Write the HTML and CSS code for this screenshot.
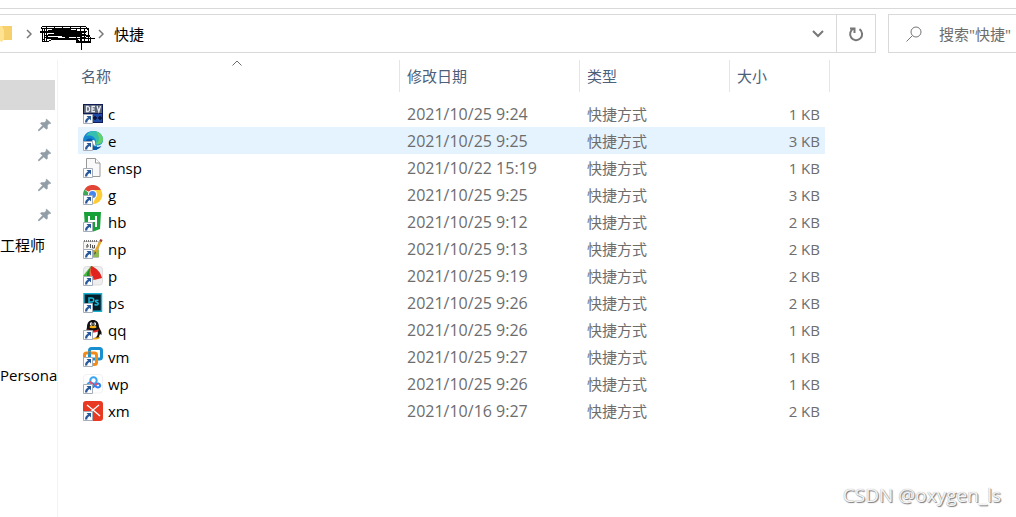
FILE: index.html
```html
<!DOCTYPE html>
<html lang="zh-CN">
<head>
    <meta charset="UTF-8">
    <meta name="viewport" content="width=device-width, initial-scale=1.0">
    <title>快捷</title>
    <link rel="stylesheet" href="styles.css">
</head>
<body>
    <svg class="defs" width="0" height="0" aria-hidden="true">
        <symbol id="shortcut" viewBox="0 0 10 10">
            <path d="M.5.5h9v9h-9z" fill="#fff" stroke="#a5adb8"/>
            <path d="M3.500 2H8v4.500L6.600 5.100C5 6 4.400 7 4.300 8.400H2C2 6.200 3 4.700 5 3.500z" fill="#28589c"/>
        </symbol>
        <symbol id="pin" viewBox="0 0 14 14">
            <path d="M8.500 1 13 5.300l-1.300.5-.7-.2-1.600 1.900.1 2.900-1.100.9L5.700 8.900 1 13l-.8-.3v-.6L4.500 7.600 2.300 5.400l.9-1 3 .2L8.300 3l-.3-1z" fill="#929ea7" stroke="#929ea7" stroke-width=".5"/>
        </symbol>
    </svg>

    <header class="toolbar">
        <nav class="address" aria-label="地址">
            <svg class="folder" width="12" height="18" viewBox="0 0 12 18"><path d="M0 1h12v14H0z" fill="#f5d06c"/><path d="M0 1h2l2 4v9l-2 3-2-1z" fill="#ffe391"/></svg>
            <svg class="chevron" width="6" height="10" viewBox="0 0 6 10"><path d="M1 1l4 4-4 4"/></svg>
            <svg class="scribble" width="56" height="28" viewBox="0 0 56 28" fill="none" stroke="#000" shape-rendering="crispEdges">
                <path d="M1.500 4.500h44l3 4v4l2 3v4h-15M1.500 4.500v2h44M0 9.500h47M0 10.500h46M2.500 7v13l7-1 3-2h24l3 3h11M2 18.500l8-6 10 1 14 4 14-3M4.500 7v13M6.500 5v14M5 13.500h43M8 12.500h38M7 16.500h40M36.500 7v13h12v-14M40.500 5v15M44.500 6v13M4 15.500h14M14.500 4v4M22.500 4v4M30.500 4v4M8 8.500h28l4 3"/>
                <path d="M14 11h25M22 14h18M12 8h18" stroke-width="2"/>
                <path d="M15 11l10 2h14" stroke-width="3"/>
                <path d="M41.500 9v19M33 16.500h22"/>
            </svg>
            <svg class="chevron" width="6" height="10" viewBox="0 0 6 10"><path d="M1 1l4 4-4 4"/></svg>
            <a class="crumb" href="#">快捷</a>
            <button class="history" type="button" aria-label="历史记录">
                <svg width="12" height="8" viewBox="0 0 12 8"><path d="M1 1l5 5 5-5"/></svg>
            </button>
            <button class="refresh" type="button" aria-label="刷新">
                <svg width="16" height="16" viewBox="0 0 16 16"><path d="M11.500 3.200a6 6 0 1 1-5.900-.5"/><path d="M2 2.500h4.500V7"/></svg>
            </button>
        </nav>
        <label class="search">
            <svg width="16" height="16" viewBox="0 0 16 16"><circle cx="10" cy="6" r="5"/><path d="M6.500 9.500L.5 15.500"/></svg>
            <input type="text" placeholder='搜索"快捷"' aria-label="搜索">
        </label>
    </header>

    <div class="content">
        <aside class="sidebar">
            <div class="side-row selected"></div>
            <div class="side-row pinned"><svg width="14" height="14"><use href="#pin"/></svg></div>
            <div class="side-row pinned"><svg width="14" height="14"><use href="#pin"/></svg></div>
            <div class="side-row pinned"><svg width="14" height="14"><use href="#pin"/></svg></div>
            <div class="side-row pinned"><svg width="14" height="14"><use href="#pin"/></svg></div>
            <div class="side-row">工程师</div>
            <div class="side-row drive">Persona</div>
        </aside>

        <main class="files">
            <table class="file-table">
                <thead>
                    <tr>
                        <th class="col-name"><button type="button">名称
                            <svg class="sort" width="10" height="6" viewBox="0 0 10 6"><path d="M.5 5.500L5 1l4.500 4.500"/></svg></button></th>
                        <th class="col-date"><button type="button">修改日期</button></th>
                        <th class="col-type"><button type="button">类型</button></th>
                        <th class="col-size"><button type="button">大小</button></th>
                    </tr>
                </thead>
                <tbody>
                    <tr>
                        <td><div class="name">
                            <svg class="icon" viewBox="0 0 20 20"><path d="M0 0h20v19H0z" fill="#101c58"/><path d="M1 10h18v8H1z" fill="#1e4ba6"/><path d="M1 1h18v8H1z" fill="#5b6475"/><path d="M3.500 2.500v5h1.500l1.500-1v-3L5 2.500zM12 2.500H9v5h3M9 5h2.500M14 2l1.800 5.500L17.500 2" fill="none" stroke="#e8ebf2" stroke-width="1.300"/><path d="M10 14h4M12 12v4M15 14h4M17 12v4" stroke="#071136" stroke-width="1.500"/><use href="#shortcut" y="10" width="10" height="10"/></svg>
                            c</div></td>
                        <td class="date">2021/10/25 9:24</td>
                        <td>快捷方式</td>
                        <td class="size">1 KB</td>
                    </tr>
                    <tr class="hover">
                        <td><div class="name">
                            <svg class="icon" viewBox="0 0 20 20"><path d="M0 10C0 4 4.500 0 10 0c6 0 10 4 10 9 0 4-3 5.500-6 5.500V19H8L0 12z" fill="#1488cf"/><path d="M4 3.500C6 1 8 0 10.500 0 16 0 20 4 20 8.500c0 4.500-5.500 6.500-8 4.500 1.500-2 1-5-1-6.500C9 4.500 6 4 3 5z" fill="#35bfb0"/><path d="M13 .5c4 1 7 4.500 7 8-.3 4-5 5.500-7.500 4.500C17 11 17 6 13 .5z" fill="#65d06a"/><path d="M9 9.500c2-1.500 3.500.5 3 2.500-.5 1.500.5 2.500 3 2.500h-4z" fill="#fff"/><path d="M3 10c1-3 5-3 7-1-2 0-3 3-1 5 2.500 2.500 6 2.500 9.500 1-2.500 4-8 5-12 3z" fill="#0c59a8"/><use href="#shortcut" y="10" width="10" height="10"/></svg>
                            e</div></td>
                        <td class="date">2021/10/25 9:25</td>
                        <td>快捷方式</td>
                        <td class="size">3 KB</td>
                    </tr>
                    <tr>
                        <td><div class="name">
                            <svg class="icon" viewBox="0 0 20 20"><path d="M3.500.5h9l4.500 4.500v13.500H3.500z" fill="#f9f9f9" stroke="#999"/><path d="M12.500.5V5H17" fill="#fff" stroke="#999"/><use href="#shortcut" y="10" width="10" height="10"/></svg>
                            ensp</div></td>
                        <td class="date">2021/10/22 15:19</td>
                        <td>快捷方式</td>
                        <td class="size">1 KB</td>
                    </tr>
                    <tr>
                        <td><div class="name">
                            <svg class="icon" viewBox="0 0 20 20"><path d="M10 9L1.500 4.500A9.500 9.500 0 0 1 18 5z" fill="#e24436"/><path d="M10 9h-3L1.500 4.500a9 9 0 0 0 0 9.500l4.500 4 4-5z" fill="#3da854"/><path d="M10 5h8a9.300 9.300 0 0 1-8.500 14l4-8z" fill="#fc3"/><circle cx="9.500" cy="9.500" r="4.500" fill="#fff"/><circle cx="9.500" cy="9.500" r="3.500" fill="#4687ed"/><use href="#shortcut" y="10" width="10" height="10"/></svg>
                            g</div></td>
                        <td class="date">2021/10/25 9:25</td>
                        <td>快捷方式</td>
                        <td class="size">3 KB</td>
                    </tr>
                    <tr>
                        <td><div class="name">
                            <svg class="icon" viewBox="0 0 20 20"><path d="M1 0h17l-1 17-6.500 2.500L2 17z" fill="#17a138"/><path d="M6 4v9M13 4v11M6 9h7" fill="none" stroke="#fff" stroke-width="2"/><use href="#shortcut" y="10" width="10" height="10"/></svg>
                            hb</div></td>
                        <td class="date">2021/10/25 9:12</td>
                        <td>快捷方式</td>
                        <td class="size">2 KB</td>
                    </tr>
                    <tr>
                        <td><div class="name">
                            <svg class="icon" viewBox="0 0 20 20"><path d="M.5 2.500h15v16H.5z" fill="#f7f7f5" stroke="#bbb"/><path d="M1 2h14" stroke="#777" stroke-dasharray="1 1" stroke-width="2"/><path d="M4 9V6l1-1M3.500 7H6M7.500 5v4M9.500 6v3h2V6" fill="none" stroke="#555"/><path d="M10 11h6v7h-6z" fill="#8ebb54"/><path d="M18 1.500l-6 12" stroke="#e5a929" stroke-width="2.500"/><path d="M18.500 .5l-1 2" stroke="#a43c32" stroke-width="2.500"/><path d="M12 12l-1 4 2-2z" fill="#444"/><use href="#shortcut" y="10" width="10" height="10"/></svg>
                            np</div></td>
                        <td class="date">2021/10/25 9:13</td>
                        <td>快捷方式</td>
                        <td class="size">2 KB</td>
                    </tr>
                    <tr>
                        <td><div class="name">
                            <svg class="icon" viewBox="0 0 20 20"><rect x=".5" y=".5" width="19" height="18.500" rx="3" fill="#eee" stroke="#ddd"/><path d="M0 10L8 0l2 1-4 9z" fill="#46b63c"/><path d="M9 1C5 4 3.500 7 4 10h3z" fill="#218f2c"/><path d="M8 0c6 2 9.500 6.500 11 12l-8 2C7.500 10 7 5 8 0z" fill="#e12320"/><path d="M8 1c-1 5 1 9 4 13H9C6 10 6 5 8 1z" fill="#fa6746"/><use href="#shortcut" y="10" width="10" height="10"/></svg>
                            p</div></td>
                        <td class="date">2021/10/25 9:19</td>
                        <td>快捷方式</td>
                        <td class="size">2 KB</td>
                    </tr>
                    <tr>
                        <td><div class="name">
                            <svg class="icon" viewBox="0 0 20 20"><path d="M1 .8h17.500v17.500H1z" fill="#071e29" stroke="#17b0d1" stroke-width="1.500"/><path d="M6 12V5h2.500c3 0 3 4 0 4H6M15.500 7.500c-3-1-4 1-1.500 2 2.500.8 1 3.500-2.500 2" fill="none" stroke="#19b6d8" stroke-width="1.500"/><use href="#shortcut" y="10" width="10" height="10"/></svg>
                            ps</div></td>
                        <td class="date">2021/10/25 9:26</td>
                        <td>快捷方式</td>
                        <td class="size">2 KB</td>
                    </tr>
                    <tr>
                        <td><div class="name">
                            <svg class="icon" viewBox="0 0 20 20"><ellipse cx="11" cy="17.500" rx="6" ry="2" fill="#f4a919"/><path d="M4 7C4 2.500 6.500 0 10 0s6 2.500 6 7l2.500 5v3l-1.500-1-1.500 3.500h-8L2.500 15z" fill="#111"/><path d="M6.500 11h8c1 4-1 7-4 7s-5-3-4-7z" fill="#fff"/><ellipse cx="8.200" cy="4" rx="1.300" ry="1.800" fill="#fff"/><ellipse cx="11.800" cy="4" rx="1.300" ry="1.800" fill="#fff"/><circle cx="8.500" cy="4" r=".6"/><circle cx="11.500" cy="4" r=".6"/><ellipse cx="10" cy="7" rx="3.500" ry="1.200" fill="#f6b31a"/><path d="M4.500 9c3 2 8 2 11 0v2c-3 2-8 2-11 0z" fill="#e52929"/><use href="#shortcut" y="10" width="10" height="10"/></svg>
                            qq</div></td>
                        <td class="date">2021/10/25 9:26</td>
                        <td>快捷方式</td>
                        <td class="size">1 KB</td>
                    </tr>
                    <tr>
                        <td><div class="name">
                            <svg class="icon" viewBox="0 0 20 20"><rect x="6.500" y="1.500" width="12" height="10.500" rx="2" fill="none" stroke="#188fcf" stroke-width="3"/><rect x="1.500" y="6" width="12" height="11.500" rx="2" fill="none" stroke="#f28b17" stroke-width="3"/><path d="M6.500 5v6" stroke="#188fcf" stroke-width="2.500"/><use href="#shortcut" y="10" width="10" height="10"/></svg>
                            vm</div></td>
                        <td class="date">2021/10/25 9:27</td>
                        <td>快捷方式</td>
                        <td class="size">1 KB</td>
                    </tr>
                    <tr>
                        <td><div class="name">
                            <svg class="icon" viewBox="0 0 20 20"><rect x=".5" y=".5" width="19" height="18.500" rx="3" fill="#fff" stroke="#f1f1f1"/><circle cx="10.500" cy="6.500" r="3.200" fill="none" stroke="#39a5f3" stroke-width="2"/><path d="M8 8.500C4.500 8.500 4 10 4 13" fill="none" stroke="#39a5f3" stroke-width="2"/><path d="M8 9c2.500-.5 4 4.500 7 4.500 3.500-.5 2.500-4.500-.5-4-2 .5-3 4-6 4" fill="none" stroke="#3182ee" stroke-width="2"/><path d="M6.500 7.800l3 2.200M14 9.500l-2 2" stroke="#f24b62" stroke-width="2"/><use href="#shortcut" y="10" width="10" height="10"/></svg>
                            wp</div></td>
                        <td class="date">2021/10/25 9:26</td>
                        <td>快捷方式</td>
                        <td class="size">1 KB</td>
                    </tr>
                    <tr>
                        <td><div class="name">
                            <svg class="icon" viewBox="0 0 20 20"><rect width="20" height="20" rx="3" fill="#e83a23"/><path d="M4 4l6 5 6-5M10 9l7 6M10 9l-6 5" fill="none" stroke="#fff" stroke-width="1.300"/><use href="#shortcut" y="10" width="10" height="10"/></svg>
                            xm</div></td>
                        <td class="date">2021/10/16 9:27</td>
                        <td>快捷方式</td>
                        <td class="size">2 KB</td>
                    </tr>
                </tbody>
            </table>
        </main>
    </div>

    <div class="watermark">CSDN @oxygen_ls</div>
</body>
</html>
```

FILE: styles.css
```css
* {
    margin: 0;
    padding: 0;
    box-sizing: border-box;
}

body {
    font-family: "Open Sans", "Noto Sans CJK SC", sans-serif;
    font-size: 15px;
    line-height: 20px;
    color: #000;
    background: #fff;
    min-height: 100vh;
    padding-top: 8px;
    display: flex;
    flex-direction: column;
}

button,
input {
    font: inherit;
    border: none;
    background: none;
}

.defs {
    position: absolute;
}

/* Address bar and search */
.toolbar {
    display: flex;
    gap: 12px;
    padding-top: 5px;
    border-top: 1px solid #d9d9d9;
}

.address {
    flex: 1;
    height: 39px;
    display: flex;
    align-items: center;
    border: 1px solid #d9d9d9;
    border-left: none;
}

.folder {
    margin-right: 14px;
}

.chevron {
    fill: none;
    stroke: #777;
    stroke-width: 1.5;
}

.scribble {
    margin: 4px 2px 0 8px;
}

.crumb {
    margin-left: 10px;
    color: #000;
    text-decoration: none;
}

.history {
    margin-left: auto;
    width: 37px;
    height: 37px;
}

.refresh {
    width: 39px;
    height: 37px;
    border-left: 1px solid #d9d9d9;
}

.history svg,
.refresh svg {
    display: block;
    margin: 0 auto;
    fill: none;
    stroke: #777;
    stroke-width: 2;
}

.search {
    width: 128px;
    height: 39px;
    display: flex;
    align-items: center;
    gap: 17px;
    padding-left: 17px;
    border: 1px solid #d9d9d9;
    border-right: none;
}

.search svg {
    flex: none;
    fill: none;
    stroke: #767676;
}

.search input {
    flex: 1;
    min-width: 0;
    outline: none;
}

.search input::placeholder {
    color: #6d6d6d;
}

.content {
    flex: 1;
    display: flex;
    padding-top: 7px;
}

/* Navigation pane */
.sidebar {
    width: 58px;
    padding-top: 20px;
    border-right: 1px solid #f2f2f2;
}

.side-row {
    width: 55px;
    height: 30px;
    display: flex;
    align-items: center;
    white-space: nowrap;
}

.selected {
    background: #d9d9d9;
}

.pinned {
    justify-content: flex-end;
    padding-right: 3px;
}

.drive {
    margin-top: 100px;
}

/* File list */
.files {
    flex: 1;
    padding-left: 20px;
}

.file-table {
    width: 752px;
    table-layout: fixed;
    border-collapse: separate;
    border-spacing: 0;
    color: #6d6d6d;
}

.file-table th {
    height: 40px;
    vertical-align: top;
    font-weight: normal;
}

.file-table th button {
    position: relative;
    display: block;
    width: 100%;
    height: 32px;
    padding-left: 7px;
    text-align: left;
    color: #4c607a;
    border-right: 1px solid #e5e5e5;
}

.file-table .col-name button {
    padding-left: 3px;
}

.col-name {
    width: 322px;
}

.col-date {
    width: 180px;
}

.col-type {
    width: 150px;
}

.col-size {
    width: 100px;
}

.sort {
    position: absolute;
    top: 0;
    left: 50%;
    margin-left: -7px;
    fill: none;
    stroke: #6d6d6d;
}

.file-table td {
    height: 27px;
    padding-left: 7px;
}

.file-table td:first-child {
    padding-left: 5px;
}

.name {
    display: flex;
    align-items: center;
    gap: 5px;
    color: #000;
}

.icon {
    width: 20px;
    height: 20px;
}

.file-table .date {
    font-size: 16px;
}

.file-table .size {
    text-align: right;
    padding-right: 5px;
    border-right: 5px solid transparent;
    background-clip: padding-box;
}

.hover td {
    background-color: #e5f3ff;
}

.watermark {
    position: absolute;
    right: 15px;
    bottom: 8px;
    font-size: 19px;
    line-height: 27px;
    color: #f4f4f4;
    text-shadow: 1px 1px 1px #777, 0 0 1px #999;
}
```
